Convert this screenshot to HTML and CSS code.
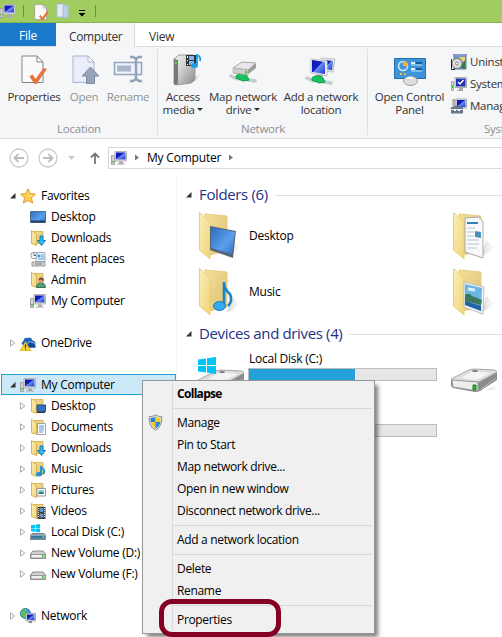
FILE: index.html
```html
<!DOCTYPE html>
<html lang="en">
<head>
<meta charset="utf-8">
<title>My Computer</title>
<link rel="stylesheet" href="styles.css">
</head>
<body>
<svg class="defs" width="0" height="0" aria-hidden="true">
<defs>
<linearGradient id="scr" x1="0" y1="0" x2="1" y2="1"><stop offset="0" stop-color="#0b16a8"/><stop offset=".45" stop-color="#1220c4"/><stop offset=".5" stop-color="#6d8df2"/><stop offset="1" stop-color="#1a35d0"/></linearGradient>
<linearGradient id="fold" x1="0" y1="0" x2="1" y2="1"><stop offset="0" stop-color="#fdf0b4"/><stop offset="1" stop-color="#edd37c"/></linearGradient>
<linearGradient id="foldback" x1="0" y1="0" x2="1" y2="1"><stop offset="0" stop-color="#f3df98"/><stop offset="1" stop-color="#dfc072"/></linearGradient>
<linearGradient id="metal" x1="0" y1="0" x2="1" y2="1"><stop offset="0" stop-color="#f7f7f7"/><stop offset=".5" stop-color="#c6c6c6"/><stop offset="1" stop-color="#888"/></linearGradient>
<linearGradient id="sky" x1="0" y1="0" x2="1" y2="1"><stop offset="0" stop-color="#2c69b8"/><stop offset=".6" stop-color="#5ba0ee"/><stop offset="1" stop-color="#346fc0"/></linearGradient>
<linearGradient id="shade" x1="0" y1="0" x2="1" y2="0"><stop offset="0" stop-color="#bbb" stop-opacity=".7"/><stop offset="1" stop-color="#ddd" stop-opacity="0"/></linearGradient>
<symbol id="pc" viewBox="0 0 16 16"><path d="M.5 5.500h3v9h-3z" fill="#d5d5d5" stroke="#a0a0a0"/><path d="M1 11h2v1.500H1z" fill="#55c34a"/><path d="M4 1.500h11.500v9.500H4z" fill="#e2e2e2" stroke="#b5b5b5"/><path d="M5 2.500h9.500v7H5z" fill="url(#scr)"/><path d="M8 11.500h4v2h2v1H6v-1h2z" fill="#aaa"/></symbol>
<symbol id="sheet" viewBox="0 0 26 30"><path d="M1 1h15l6 6v20.500H1z" fill="#fafafa" stroke="#858585"/><path d="M16 1v6h6z" fill="#fff" stroke="#858585"/><path d="M8.500 21.500l3-2 3 4.500 8-11 3.500 1-10.500 15h-2z" fill="#e8733a"/></symbol>
<symbol id="open" viewBox="0 0 28 30"><path d="M1 1h15l6 6v20.500H1z" fill="#e9eefa" stroke="#a9b5d0"/><path d="M16 1v6h6z" fill="#fff" stroke="#a9b5d0"/><path d="M18.500 12l8.500 9h-4.500v7.500h-8V21H10z" fill="#98a3b8" stroke="#7f8ba3"/></symbol>
<symbol id="rename" viewBox="0 0 30 28"><path d="M1.500 7.500h27v12h-27z" fill="#eef3fb" stroke="#92a4be" stroke-width="1.500"/><path d="M4 10.500h14v6H4z" fill="#a8b5cb"/><path d="M17 2h3l3 1.500L26 2h3M23 3v21M17 26h3l3-2 3 2h3" fill="none" stroke="#93a2b9" stroke-width="2.500"/></symbol>
<symbol id="media" viewBox="0 0 30 34"><path d="M22 26l8-6-5 8z" fill="url(#shade)"/><path d="M2 7l5-4h14l2 3v22l-4 3-15 2-2-1z" fill="url(#metal)" stroke="#999"/><path d="M2 7l4 1v23l-2 2-2-1z" fill="#777"/><path d="M3 10h2v2H3z" fill="#4ce21e"/><path d="M14 3h10v11H14z" fill="#333"/><path d="M17 4h5v4h-5zM17 9h5v4h-5z" fill="#79bbec"/><path d="M15 4h1v2h-1zm0 4h1v1h-1zm0 4h1v1h-1z" fill="#fff"/><path d="M25 2v11M25 3q4 1 3 6" stroke="#1a9ce8" stroke-width="1.800" fill="none"/><ellipse cx="22.500" cy="13.500" rx="3.500" ry="2.500" fill="#1a9ce8"/></symbol>
<symbol id="cable" viewBox="0 0 28 12"><path d="M2 4l6 3 4-1 8 2 6 1" stroke="#c3cccf" stroke-width="3.500" fill="none" stroke-linecap="round"/><path d="M7 4l3-2h5l3 2 2 4-6 1-7-3z" fill="#18c45c" stroke="#0a9845"/></symbol>
<symbol id="mapdrive" viewBox="0 0 28 26"><use href="#cable" x="0" y="13" width="28" height="12"/><path d="M4 9l9-6 14 1v5l-9 7-14-2z" fill="#999"/><path d="M4 9l9-6 14 1-8 7z" fill="#e7e7e7" stroke="#aaa"/><path d="M4 9l15 2v5L4 14z" fill="#cfcfcf" stroke="#999" stroke-width=".5"/><path d="M16 12h2v2.500h-2z" fill="#43d81c"/></symbol>
<symbol id="netloc" viewBox="0 0 32 30"><path d="M16 2l14 1-2 13-11-1z" fill="#e4e4e4" stroke="#c2c2c2"/><path d="M18 4l10 1-1 9-9-1z" fill="url(#scr)"/><path d="M6 3l16 2v15L6 17z" fill="#f1f1f1" stroke="#c5c5c5"/><path d="M7 4l13 2v12L7 16z" fill="url(#scr)"/><path d="M12 18h6v3h-7z" fill="#bbb"/><use href="#cable" x="0" y="18" width="28" height="12"/></symbol>
<symbol id="cpanel" viewBox="0 0 32 30"><path d="M.5 1.500h31v20H.5z" fill="#3e94d6" stroke="#236fb0"/><circle cx="9" cy="9" r="4.500" fill="none" stroke="#d3e9fa" stroke-width="1.500"/><path d="M9 9V4a5 5 0 015 5z" fill="#ffac27"/><path d="M17 6h4M17 12h4" stroke="#e3f3ff" stroke-width="2"/><path d="M22 6h6M22 12h6" stroke="#135ba0" stroke-width="2"/><path d="M17 8h11M17 14h11" stroke="#b6e2ff"/><path d="M6 17h2M10 17h2" stroke="#ffb642" stroke-width="2"/><ellipse cx="16.500" cy="24" rx="7" ry="4.500" fill="#ddd" stroke="#a2a2a2"/><path d="M11 22q5-5 10 0" fill="#f7f7f7"/></symbol>
<symbol id="uninst" viewBox="0 0 16 16"><path d="M3 1h12v14H3z" fill="#7a96c2" stroke="#6075a5"/><path d="M2 1h14" stroke="#8797d0" stroke-width="2"/><path d="M8 3h6v7z" fill="#eed46a"/><path d="M9 13l5-7v9z" fill="#327c3b"/><circle cx="6" cy="9.500" r="5" fill="#ddd" stroke="#7b7b7b"/><circle cx="6" cy="9.500" r="1.500" fill="#fff" stroke="#888"/><path d="M.5 5v10.500H4" fill="none" stroke="#222"/></symbol>
<symbol id="sys" viewBox="0 0 16 16"><path d="M.5 5.500h2v9h-2z" fill="#ddd" stroke="#aaa"/><path d="M1 9h1v3H1z" fill="#34c929"/><path d="M4 1.500h11.500v10H4z" fill="#eee" stroke="#aaa"/><path d="M5 2.500h9.500v8H5z" fill="#1c32b8"/><path d="M7 6l2 2 3.500-4" fill="none" stroke="#fff" stroke-width="1.500"/><path d="M8 12h4v3H6v-1h2z" fill="#aaa"/></symbol>
<symbol id="manage" viewBox="0 0 16 16"><path d="M2 1.500h2v7H2z" fill="#ccc" stroke="#999"/><path d="M5 1h10.500v9H5z" fill="#e7e7e7" stroke="#aaa"/><path d="M6 2h8.500v7H6z" fill="url(#scr)"/><path d="M4 9V7.500h4V9h4v6.500H0V9z" fill="#687888"/><path d="M0 11.500h12" stroke="#dbe4ec"/><path d="M3 11h2v2H3zm4 0h2v2H7z" fill="#fff"/></symbol>
<symbol id="star" viewBox="0 0 16 16"><path d="M8 .8l2.200 4.800 5.200.6-3.900 3.500 1.100 5.300L8 12.400 3.400 15l1.100-5.300L.6 6.200l5.200-.6z" fill="#ffd04f" stroke="#e5952e"/><path d="M8 3l1 4 4 .5-4 1z" fill="#fff1ae"/></symbol>
<symbol id="desk" viewBox="0 0 16 16"><path d="M.5 2.500h15v11H.5z" fill="url(#sky)" stroke="#4e718f"/><path d="M1 12.500h14" stroke="#25405e" stroke-width="2"/></symbol>
<symbol id="fold16" viewBox="0 0 16 16"><path d="M4 1.500h9v12H5z" fill="url(#foldback)" stroke="#dbb75b"/><path d="M1.500.5l5 3v12l-5-2z" fill="url(#fold)" stroke="#d8b356"/></symbol>
<symbol id="down" viewBox="0 0 16 16"><use href="#fold16"/><path d="M10 6h3v4.500h2.500L11.500 15.500 7.500 10.500H10z" fill="#38b6f0" stroke="#147dbd"/></symbol>
<symbol id="recent" viewBox="0 0 16 16"><path d="M6 1.500h9v9H6z" fill="#edf4fa" stroke="#9aa9b5"/><path d="M8 4h2v2H8zm3 0h3M11 6h3M8 8h6" stroke="#4da0dd" fill="#4da0dd"/><path d="M2 11h13v4H2z" fill="#d7d7d7" stroke="#999"/><path d="M5 13h7" stroke="#777"/><circle cx="4" cy="4.500" r="3.200" fill="#f7f7f7" stroke="#999"/><path d="M4 2.500v2h2" fill="none" stroke="#555"/></symbol>
<symbol id="admin" viewBox="0 0 16 16"><use href="#fold16"/><path d="M6.500 15.500q0-4.500 4.500-4.500t4.500 4.500z" fill="#4fa477" stroke="#367456"/><circle cx="11" cy="8.500" r="2.700" fill="#d79c6d"/><path d="M8.500 8q0-3 3-2.500T13.500 9l-2-1.500z" fill="#734a36"/></symbol>
<symbol id="deskf" viewBox="0 0 16 16"><use href="#fold16"/><path d="M7 7h8.500v6.500H7z" fill="#3472c0" stroke="#284e78"/><path d="M7 14.500h8" stroke="#303a46"/></symbol>
<symbol id="docs" viewBox="0 0 16 16"><use href="#fold16"/><path d="M7.500 4.500h8v11h-8z" fill="#f7faff" stroke="#a1a1a1"/><path d="M9 7h5M9 9h5M9 11h5M9 13h4" stroke="#6594c9"/></symbol>
<symbol id="music" viewBox="0 0 16 16"><use href="#fold16"/><path d="M11 5v8M11 5q0 2 3 4 1 2-1 4" fill="none" stroke="#1792dc" stroke-width="1.800"/><ellipse cx="9" cy="13.300" rx="3" ry="2.200" fill="#1792dc"/></symbol>
<symbol id="pics" viewBox="0 0 16 16"><use href="#fold16"/><path d="M7 6.500h8.500v7.500H7z" fill="#fff" stroke="#999"/><path d="M8.500 8H14v4H8.500z" fill="#8cc6ee"/><path d="M8.500 12v-1.500l3-1L14 11v1z" fill="#3f7b77"/></symbol>
<symbol id="vids" viewBox="0 0 16 16"><use href="#fold16"/><path d="M7.500 4h8v12h-8z" fill="#36393c"/><path d="M9.500 5h4v4h-4zM9.500 10.500h4v4h-4z" fill="#6995be"/><path d="M8.500 5v10M14.500 5v10" stroke="#ddd" stroke-dasharray="1 1"/></symbol>
<symbol id="win" viewBox="0 0 18 17"><path d="M0 2.500l8-1V8H0zM9 1.300L18 0v8H9zM0 9h8v6.500l-8-1zM9 9h9v8l-9-1.200z" fill="#00c3f7"/></symbol>
<symbol id="vol" viewBox="0 0 16 16"><path d="M3 6h10l2.500 3v4.500H.5V9z" fill="#d0d0d0" stroke="#888"/><path d="M1 9.500h14v3.500H1z" fill="#f1f1f1" stroke="#999"/><path d="M12 10h1.500v2.500H12z" fill="#28c72c"/></symbol>
<symbol id="cdisk" viewBox="0 0 16 16"><path d="M2 9.500h12l2 2v4H0v-4z" fill="#8fa3b3" stroke="#758795"/><path d="M1 12h14v2.500H1z" fill="#3a75a2"/><path d="M12.500 12H14v2h-1.500z" fill="#4ce344"/><use href="#win" x="1" y="0" width="9" height="8.500"/></symbol>
<symbol id="cloud" viewBox="0 0 16 16"><path d="M3 10Q0 8 3.500 6 4 2 8 3q3-2 4.500 2.500Q16 6 15.500 10z" fill="#1766bb"/><path d="M6 13q-2-3 1.500-4 1-3.500 4.500-1.500 4 .5 4 5.500z" fill="#0a489b" stroke="#fff" stroke-width=".6"/><path d="M5.500 6.500L11 16H0z" fill="#ffd633" stroke="#c29210" stroke-width=".7"/><path d="M5.500 9.500v3M5.500 13.500v1" stroke="#222" stroke-width="1.300"/></symbol>
<symbol id="net" viewBox="0 0 16 16"><circle cx="5.500" cy="5.500" r="5" fill="#3d9ee0" stroke="#2277b0"/><path d="M1 4q3-4 6-3L5 5l2 3-3 2q-3-2-3-6z" fill="#5fc04f"/><path d="M6 5.500h9.500V13H6z" fill="#dedede" stroke="#aaa"/><path d="M7 6.500h7.500V12H7z" fill="url(#scr)"/><path d="M9 13h3v2H8v-.500h1z" fill="#888"/></symbol>
<symbol id="bigfold" viewBox="0 0 46 48"><path d="M28 45l14-9-9-8z" fill="url(#shade)"/><path d="M6 2l22 2v35L10 43z" fill="url(#foldback)" stroke="#e7cd81"/><path d="M.5.500L11 10v37L.5 38z" fill="url(#fold)" stroke="#ecd174"/></symbol>
<symbol id="bdesk" viewBox="0 0 46 48"><use href="#bigfold"/><path d="M11 14l26 5-3 27-23-8z" fill="#566577"/><path d="M12 15l24 5-3 22-21-6z" fill="url(#sky)"/></symbol>
<symbol id="bmusic" viewBox="0 0 46 48"><use href="#bigfold"/><path d="M25 14v25M25 15q0 6 6 11 3 7-2 12" fill="none" stroke="#1685ca" stroke-width="2.600"/><ellipse cx="20.500" cy="38" rx="6" ry="4.500" fill="#37abee" stroke="#1779bb"/></symbol>
<symbol id="bdoc" viewBox="0 0 46 48"><use href="#bigfold"/><path d="M12 6l14-1 4 5v36l-18-6z" fill="#f7f9fb" stroke="#aaa"/><path d="M14 11h11" stroke="#3981b5" stroke-width="2"/><path d="M14 16h8M14 20h7M14 24h7M14 28h12M14 32h12M14 36h10" stroke="#b9c5d2"/><path d="M22 19l6 1v6l-6-1z" fill="#4b91bd"/></symbol>
<symbol id="bpic" viewBox="0 0 46 48"><use href="#bigfold"/><path d="M11 14l20 5-1 27-19-7z" fill="#f6f8f8" stroke="#bbb"/><path d="M12 16l17 4-1 23-16-6z" fill="#69b5e4"/><path d="M12 27q4-3 7 1l10 4-1 5-16-4z" fill="#3b795d"/><path d="M12 33l16 5v5l-16-6z" fill="#2463a1"/><path d="M15 21l7 1" stroke="#d9f0fb" stroke-width="3"/></symbol>
<symbol id="drive" viewBox="0 0 48 26"><path d="M38 22l9-7v7z" fill="url(#shade)"/><path d="M1 12L19 2q2-1 5-1l20 1q2 0 3 2v8L30 23q-2 1-5 1L3 20q-2-1-2-3z" fill="#8c8c8c"/><path d="M1 11L19 2q2-1 5-1l20 1q2 0 3 2L29 14H4z" fill="#dedede" stroke="#aaa"/><path d="M11 10L23 3l17 2-13 7z" fill="#f4f4f4"/><ellipse cx="25" cy="3" rx="3" ry="1" fill="#777"/><path d="M2 12l26 2v9L3 19z" fill="#ededed" stroke="#999"/><path d="M23 17h3v5h-3z" fill="#18c51d" stroke="#247325"/><path d="M31 21L46 10" stroke="#bbb"/></symbol>
<symbol id="shield" viewBox="0 0 14 17"><path d="M7 .8Q10 3 13.200 2.500q.8 10-6.200 13.700Q0 12.500.8 2.500 4 3 7 .8z" fill="#ddd" stroke="#909090"/><path d="M7 2.500v5.500H2.200V4Q5 4 7 2.500z" fill="#2582d4"/><path d="M7 2.500Q9 4 11.800 4v4H7z" fill="#fcca25"/><path d="M2.200 8H7v6.500Q3 12 2.200 8z" fill="#fcca25"/><path d="M7 8h4.800Q11 12 7 14.500z" fill="#2582d4"/></symbol>
<symbol id="opened" viewBox="0 0 6 6"><path d="M5.500 0v5.500H0z" fill="#333"/></symbol>
<symbol id="closed" viewBox="0 0 6 8"><path d="M.5.800L4.800 4 .5 7.200z" fill="#fff" stroke="#a0a0a0" stroke-width=".9"/></symbol>
<symbol id="next" viewBox="0 0 4 6"><path d="M0 0l4 3-4 3z" fill="#777"/></symbol>
<symbol id="minifold" viewBox="0 0 14 16"><path d="M1 1h7v13H1z" fill="#e2eaf6" stroke="#a9c0d8"/><path d="M7 3l5-1v8h1l-1 4-5 1z" fill="#bdd0e5" stroke="#a9c0d8"/></symbol>
</defs>
</svg>

<div class="window">
  <header class="titlebar">
    <svg class="t-pc"><use href="#pc"/></svg><i class="t-sep"></i>
    <svg class="t-sheet"><use href="#sheet"/></svg>
    <svg class="t-fold"><use href="#minifold"/></svg>
    <svg class="t-more" viewBox="0 0 8 7"><path d="M1 0h6v1H1zM.5 3h7L4 6.500z" fill="#000"/></svg><i class="t-sep"></i>
  </header>
  <nav class="tabs"><span class="tab file">File</span><span class="tab active">Computer</span><span class="tab">View</span></nav>

  <section class="ribbon">
    <div class="group location">
      <div class="buttons">
        <div class="big"><svg width="26" height="30"><use href="#sheet"/></svg><span>Properties</span></div>
        <div class="big off"><svg class="i-open" width="28" height="30"><use href="#open"/></svg><span>Open</span></div>
        <div class="big off"><svg width="30" height="28"><use href="#rename"/></svg><span>Rename</span></div>
      </div>
      <div class="caption">Location</div>
    </div>
    <div class="group network">
      <div class="buttons">
        <div class="big"><svg class="i-media" width="30" height="34"><use href="#media"/></svg><span>Access<br>media <b></b></span></div>
        <div class="big"><svg class="i-map" width="28" height="26"><use href="#mapdrive"/></svg><span>Map network<br>drive <b></b></span></div>
        <div class="big"><svg class="i-loc" width="32" height="30"><use href="#netloc"/></svg><span>Add a network<br>location</span></div>
      </div>
      <div class="caption">Network</div>
    </div>
    <div class="group system">
      <div class="buttons">
        <div class="big"><svg class="i-panel" width="32" height="30"><use href="#cpanel"/></svg><span>Open Control<br>Panel</span></div>
        <div class="small-list">
          <div class="small"><svg><use href="#uninst"/></svg>Uninstall or change a program</div>
          <div class="small"><svg><use href="#sys"/></svg>System properties</div>
          <div class="small"><svg><use href="#manage"/></svg>Manage</div>
        </div>
      </div>
      <div class="caption">System</div>
    </div>
  </section>

  <div class="address">
    <svg width="20" height="20" viewBox="0 0 20 20"><circle cx="10" cy="10" r="9" fill="none" stroke="#c9c9c9" stroke-width="1.300"/><path d="M15 10H6M9.500 6L5.500 10l4 4" fill="none" stroke="#bdbdbd" stroke-width="1.800"/></svg>
    <svg class="fwd" width="20" height="20" viewBox="0 0 20 20"><circle cx="10" cy="10" r="9" fill="none" stroke="#c9c9c9" stroke-width="1.300"/><path d="M5 10h9M10.500 6l4 4-4 4" fill="none" stroke="#bdbdbd" stroke-width="1.800"/></svg>
    <svg class="hist" width="7" height="4" viewBox="0 0 7 4"><path d="M0 0h7L3.500 4z" fill="#ccc"/></svg>
    <svg class="up" width="10" height="12" viewBox="0 0 10 12"><path d="M5 12V2M1 5.500L5 1.500l4 4" fill="none" stroke="#777" stroke-width="1.800"/></svg>
    <div class="crumbs"><svg class="pc"><use href="#pc"/></svg><svg class="next"><use href="#next"/></svg><span>My Computer</span><svg class="next"><use href="#next"/></svg></div>
  </div>

  <main class="body">
    <aside class="tree">
      <div class="row"><svg class="tw o"><use href="#opened"/></svg><svg class="ic"><use href="#star"/></svg>Favorites</div>
      <div class="row sub leaf"><svg class="ic"><use href="#desk"/></svg>Desktop</div>
      <div class="row sub leaf"><svg class="ic"><use href="#down"/></svg>Downloads</div>
      <div class="row sub leaf"><svg class="ic"><use href="#recent"/></svg>Recent places</div>
      <div class="row sub leaf"><svg class="ic"><use href="#admin"/></svg>Admin</div>
      <div class="row sub leaf"><svg class="ic"><use href="#pc"/></svg>My Computer</div>
      <div class="row gap"><svg class="tw"><use href="#closed"/></svg><svg class="ic"><use href="#cloud"/></svg>OneDrive</div>
      <div class="row gap selected"><svg class="tw o"><use href="#opened"/></svg><svg class="ic"><use href="#pc"/></svg>My Computer</div>
      <div class="row sub"><svg class="tw"><use href="#closed"/></svg><svg class="ic"><use href="#deskf"/></svg>Desktop</div>
      <div class="row sub"><svg class="tw"><use href="#closed"/></svg><svg class="ic"><use href="#docs"/></svg>Documents</div>
      <div class="row sub"><svg class="tw"><use href="#closed"/></svg><svg class="ic"><use href="#down"/></svg>Downloads</div>
      <div class="row sub"><svg class="tw"><use href="#closed"/></svg><svg class="ic"><use href="#music"/></svg>Music</div>
      <div class="row sub"><svg class="tw"><use href="#closed"/></svg><svg class="ic"><use href="#pics"/></svg>Pictures</div>
      <div class="row sub"><svg class="tw"><use href="#closed"/></svg><svg class="ic"><use href="#vids"/></svg>Videos</div>
      <div class="row sub"><svg class="tw"><use href="#closed"/></svg><svg class="ic"><use href="#cdisk"/></svg>Local Disk (C:)</div>
      <div class="row sub"><svg class="tw"><use href="#closed"/></svg><svg class="ic"><use href="#vol"/></svg>New Volume (D:)</div>
      <div class="row sub"><svg class="tw"><use href="#closed"/></svg><svg class="ic"><use href="#vol"/></svg>New Volume (F:)</div>
      <div class="row gap"><svg class="tw"><use href="#closed"/></svg><svg class="ic"><use href="#net"/></svg>Network</div>
    </aside>
    <section class="content">
      <h2><svg class="tw o"><use href="#opened"/></svg><span>Folders (6)</span><i></i></h2>
      <div class="tiles">
        <div class="tile"><svg><use href="#bdesk"/></svg>Desktop</div><div class="tile"><svg><use href="#bdoc"/></svg></div>
        <div class="tile"><svg><use href="#bmusic"/></svg>Music</div><div class="tile"><svg><use href="#bpic"/></svg></div>
      </div>
      <h2><svg class="tw o"><use href="#opened"/></svg><span>Devices and drives (4)</span><i></i></h2>
      <div class="drives">
        <div class="disk"><svg class="win"><use href="#win"/></svg><svg class="hd"><use href="#drive"/></svg></div>
        <div class="usage"><span>Local Disk (C:)</span><div class="bar"><div class="fill"></div></div></div>
        <svg class="hd right"><use href="#drive"/></svg>
        <div class="usage second"><div class="bar"></div></div>
      </div>
    </section>
  </main>
</div>

<div class="menu">
  <div class="item bold">Collapse</div>
  <hr>
  <div class="item"><svg><use href="#shield"/></svg>Manage</div>
  <div class="item">Pin to Start</div>
  <div class="item">Map network drive...</div>
  <div class="item">Open in new window</div>
  <div class="item">Disconnect network drive...</div>
  <hr>
  <div class="item">Add a network location</div>
  <hr>
  <div class="item">Delete</div>
  <div class="item">Rename</div>
  <hr>
  <div class="item">Properties</div>
  <div class="marker"></div>
</div>
</body>
</html>
```
FILE: styles.css
```css
* { box-sizing: border-box; }
html, body { margin: 0; overflow: hidden; }
body { width: 502px; height: 637px; background: #fff; color: #000; font: 12px/16px "Open Sans", "Noto Sans", sans-serif; letter-spacing: -0.25px; }
svg { display: block; flex: none; }
.defs { position: absolute; }
.window { width: 502px; height: 637px; overflow: hidden; }

.titlebar { height: 23px; display: flex; align-items: center; background: #a1cc60; border-bottom: 1px solid #8ab34c; }
.t-pc { width: 17px; height: 16px; margin-left: -1px; }
.t-sep { width: 1px; height: 12px; background: #6d8e3e; margin-left: 7px; }
.t-sheet { width: 15px; height: 17px; margin: 2px 0 0 10px; }
.t-fold { width: 14px; height: 16px; margin-left: 7px; }
.t-more { width: 8px; height: 7px; margin: 4px 0 0 8px; }
.t-more + .t-sep { margin-left: 9px; }

.tabs { height: 24px; display: flex; border-bottom: 1px solid #dadbdc; color: #333; }
.tab { height: 23px; padding: 0 14px; line-height: 27px; }
.tab.file { width: 56px; padding: 0; text-align: center; color: #fff; background: #1979ca; line-height: 25px; }
.tab.active { width: 79px; height: 24px; padding: 0 0 0 13px; background: #f5f6f7; border-right: 1px solid #dadbdc; letter-spacing: -.5px; letter-spacing: -.55px; letter-spacing: -.4px; }

.ribbon { height: 92px; display: flex; background: #f5f6f7; border-bottom: 1px solid #dadbdc; color: #333; overflow: hidden; font-size: 11.5px; }
.group { display: flex; flex-direction: column; flex: none; height: 91px; position: relative; }
.location { width: 158px; }
.network { width: 210px; }
.system { width: 240px; }
.location::after, .network::after { content: ""; position: absolute; right: 0; top: 2px; height: 86px; width: 1px; background: #dfe0e2; }
.buttons { display: grid; height: 74px; }
.location .buttons { grid-template-columns: 60px 40px 48px; padding-left: 4px; }
.network .buttons { grid-template-columns: 50px 70px 86px; }
.system .buttons { grid-template-columns: 83px 150px; }
.big { display: grid; grid-template-rows: 43px 27px; justify-items: center; text-align: center; line-height: 13px; }
.big svg { margin-top: 8px; }
.big span { white-space: nowrap; }
.off { color: #8f9194; }
.big b { display: inline-block; border: 3px solid transparent; border-top-color: #333; border-bottom: 0; vertical-align: 3px; }
svg.i-open { margin-left: 3px; }
svg.i-media { margin: 5px 0 0 7px; }
svg.i-map { margin: 12px 0 0 0; }
svg.i-loc { margin: 9px 0 0 0; }
svg.i-panel { margin: 10px 0 0 1px; }
.small-list { padding-top: 4px; }
.small { height: 22px; display: flex; align-items: center; gap: 3px; white-space: nowrap; }
.small svg { width: 16px; height: 16px; }
.caption { text-align: center; color: #8d8f92; line-height: 16px; }
.system .caption { text-align: left; padding-left: 116px; }

.address { height: 37px; display: flex; align-items: center; padding-left: 9px; }
.fwd { margin-left: 9px; }
.hist { margin-left: 10px; }
.up { margin-left: 15px; }
.crumbs { height: 22px; flex: 1; margin-left: 8px; display: flex; align-items: center; border: 1px solid #d9d9d9; border-right: 0; padding-left: 2px; }
.crumbs .pc { width: 16px; height: 16px; }
.crumbs span { letter-spacing: -.2px; }
.next { width: 4px; height: 7px; margin: 0 8px; }

.body { display: flex; height: 461px; }
.tree { width: 177px; flex: none; padding-top: 9px; border-right: 1px solid #f3f3f3; }
.row { height: 21px; display: flex; align-items: center; padding-left: 10px; white-space: nowrap; }
.row.sub { padding-left: 20px; }
.row.gap { margin-top: 21px; }
.tw { width: 6px; height: 8px; }
.tw.o { width: 6px; height: 6px; }
.ic { width: 16px; height: 16px; margin: 0 5px 0 4px; }
.leaf .ic { margin-left: 10px; }
.selected { margin-left: 1px; padding-left: 8px; background: #cbe8f6; border: 1px solid #26a0da; }

.content { flex: 1; padding-top: 9px; }
h2 { margin: 0; height: 20px; display: flex; align-items: center; font-size: 15px; line-height: 20px; font-weight: 400; color: #1e3287; white-space: nowrap; padding-left: 9px; letter-spacing: -.36px; }
h2 .tw { margin-right: 7px; }
h2 span { margin-top: -2px; }
h2 i { flex: 1; height: 1px; background: #e2e2e2; margin-left: 7px; }
.tiles { display: grid; grid-template-columns: 254px 1fr; grid-auto-rows: 56px; padding: 7px 0 0 22px; }
.tile { display: flex; align-items: flex-start; line-height: 48px; }
.tile svg { width: 46px; height: 48px; margin-right: 4px; }
.drives { display: grid; grid-template-columns: 52px 190px 48px; column-gap: 6px; grid-template-rows: 56px 30px; padding-left: 13px; }
.disk { padding-left: 7px; }
.win { width: 18px; height: 17px; margin: 13px 0 0 1px; position: relative; z-index: 1; }
.hd { width: 48px; height: 26px; margin-top: -5px; }
.hd.right { margin: 24px 0 0 6px; }
.usage { padding-top: 7px; }
.usage span { display: block; margin-bottom: 1px; padding-left: 1px; }
.usage.second { padding-top: 24px; }
.bar { width: 189px; height: 13px; border: 1px solid #bcbcbc; background: #e6e6e6; }
.fill { width: 106px; height: 11px; background: #26a0da; }
.second { grid-column: 2; }

.menu { position: absolute; left: 142px; top: 380px; width: 233px; height: 254px; padding: 2px; background: #f0f0f0; border: 1px solid #979797; box-shadow: 4px 4px 4px -1px rgba(0,0,0,.5); letter-spacing: -.33px; }
.menu::before { content: ""; position: absolute; left: 29px; top: 2px; bottom: 2px; width: 1px; background: #dadada; }
.item { position: relative; height: 22px; display: flex; align-items: center; padding-left: 32px; white-space: nowrap; }
.item svg { position: absolute; left: 3px; top: 2px; width: 15px; height: 17px; }
.bold { font-weight: 700; letter-spacing: -.7px; }
.menu hr { margin: 3px 0 3px 28px; height: 1px; border: 0; background: #d7d7d7; }
.marker { position: absolute; left: 16px; top: 218px; width: 122px; height: 38px; border: 5px solid #840025; border-radius: 13px; }
```
